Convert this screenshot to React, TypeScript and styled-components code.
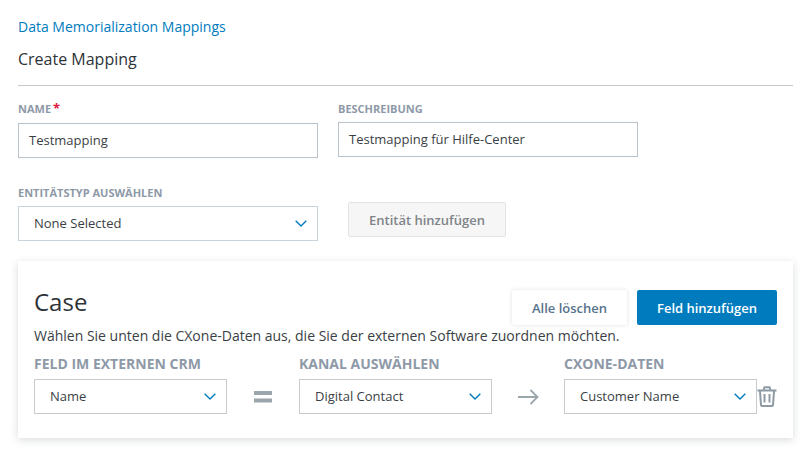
import React from "react";
import styled, { createGlobalStyle } from "styled-components";

const Global = createGlobalStyle`
  html, body { margin: 0; padding: 0; background: #fff; }
  body { font-family: "Open Sans", "Liberation Sans", sans-serif; color: #2e3338; }
`;

const Page = styled.div`
  width: 809px;
  height: 458px;
  box-sizing: border-box;
  padding: 17px 16px 0 18px;
  overflow: hidden;
`;
const Crumb = styled.a`
  display: block;
  font-size: 14px;
  line-height: 19px;
  color: #007cbe;
`;
const Title = styled.h1`
  margin: 12px 0 0;
  font-size: 16px;
  font-weight: 500;
  line-height: 22px;
  color: #2e3338;
`;
const Rule = styled.hr`
  margin: 15px 0 0;
  border: 0;
  height: 1px;
  background: #c3c8cc;
`;
const FormRow = styled.div<{ $top: number }>`
  display: flex;
  align-items: flex-start;
  gap: 20px;
  margin-top: ${(p) => p.$top}px;
`;
const Field = styled.div`
  width: 300px;
  display: flex;
  flex-direction: column;
`;
const SmallLabel = styled.label<{ $gap: number }>`
  font-size: 11px;
  font-weight: 700;
  line-height: 15px;
  color: #8e99a8;
  margin-bottom: ${(p) => p.$gap}px;
`;
const Star = styled.span`
  color: #e0173d;
  font-size: 13px;
  margin-left: 2px;
`;
const TextBox = styled.div`
  box-sizing: border-box;
  height: 35px;
  border: 1px solid #b6c4d0;
  padding: 0 10px 1px;
  display: flex;
  align-items: center;
  font-size: 13px;
  color: #3a3f45;
`;
const SelectBox = styled.div<{ $width: number; $pad: number; $border: string }>`
  box-sizing: border-box;
  width: ${(p) => p.$width}px;
  height: 35px;
  border: 1px solid ${(p) => p.$border};
  padding: 0 10px 1px ${(p) => p.$pad}px;
  display: flex;
  align-items: center;
  justify-content: space-between;
  font-size: 13px;
  color: #3a3f45;
  background: #fff;
`;
const GhostButton = styled.button`
  box-sizing: border-box;
  width: 158px;
  height: 35px;
  margin: 17px 0 0 10px;
  background: #f6f6f6;
  border: 1px solid #e2e5e8;
  border-radius: 2px;
  font: 600 13px "Open Sans", sans-serif;
  color: #7f8489;
`;
const Card = styled.section`
  box-sizing: border-box;
  height: 177px;
  margin-top: 20px;
  padding: 29px 16px 0;
  background: #fff;
  box-shadow: 0 2px 8px rgba(60, 75, 95, 0.2);
`;
const CardHead = styled.div`
  display: flex;
  align-items: flex-start;
  justify-content: space-between;
  height: 35px;
`;
const CardTitle = styled.h2`
  margin: -2px 0 0;
  font-size: 24px;
  font-weight: 400;
  line-height: 28px;
  color: #2e3338;
`;
const Actions = styled.div`
  display: flex;
  gap: 10px;
`;
const ClearButton = styled.button`
  width: 115px;
  height: 35px;
  border: 0;
  border-radius: 2px;
  background: #fff;
  box-shadow: 0 0 4px rgba(60, 75, 95, 0.16);
  font: 600 13px "Open Sans", sans-serif;
  color: #56738c;
`;
const PrimaryButton = styled.button`
  width: 140px;
  height: 35px;
  border: 0;
  border-radius: 2px;
  background: #007cbe;
  font: 600 13px "Open Sans", sans-serif;
  color: #fff;
`;
const Hint = styled.p`
  margin: 2px 0 0;
  font-size: 14px;
  line-height: 18px;
  color: #3a3f45;
`;
const MapRow = styled.div`
  display: grid;
  grid-template-columns: 193px 72px 193px 72px 193px 20px;
  margin-top: 9px;
`;
const ColLabel = styled.div`
  font-size: 14px;
  font-weight: 700;
  line-height: 19px;
  margin-bottom: 6px;
  color: #8e99a8;
  white-space: nowrap;
`;
const Joiner = styled.div`
  display: flex;
  align-items: center;
  justify-content: center;
`;
const TrashCell = styled.div`
  display: flex;
  align-items: center;
  justify-content: flex-end;
`;

const Chevron = () => (
  <svg width="12" height="7" viewBox="0 0 12 7" fill="none">
    <path d="M0.7 0.7 L6 6 L11.3 0.7" stroke="#007cbe" strokeWidth="1.4" />
  </svg>
);
const EqualIcon = () => (
  <svg width="18" height="12" viewBox="0 0 18 12">
    <rect x="0" y="0" width="18" height="4" fill="#9aa5ac" />
    <rect x="0" y="7.5" width="18" height="4" fill="#9aa5ac" />
  </svg>
);
const ArrowIcon = () => (
  <svg width="21" height="16" viewBox="0 0 21 16" fill="none">
    <path d="M0 8 H19.5 M12.5 1 L19.5 8 L12.5 15" stroke="#9aa5ac" strokeWidth="1.8" />
  </svg>
);
const TrashIcon = () => (
  <svg width="20" height="21" viewBox="0 0 20 21" fill="none" stroke="#8d9aa3" strokeWidth="2">
    <path d="M0.5 4.5 H19.5" />
    <path d="M6.5 4 L7.5 1.2 H12.5 L13.5 4" />
    <path d="M3 5 L4 19 Q4.1 20 5 20 H15 Q15.9 20 16 19 L17 5" />
    <path d="M7.5 8 V16.5 M12.5 8 V16.5" />
  </svg>
);

const Select = ({ value, width, pad, border }: { value: string; width: number; pad: number; border: string }) => (
  <SelectBox $width={width} $pad={pad} $border={border}>
    <span>{value}</span>
    <Chevron />
  </SelectBox>
);

export default function App() {
  return (
    <Page>
      <Global />
      <Crumb>Data Memorialization Mappings</Crumb>
      <Title>Create Mapping</Title>
      <Rule />
      <FormRow $top={15}>
        <Field>
          <SmallLabel $gap={7}>
            NAME<Star>*</Star>
          </SmallLabel>
          <TextBox>Testmapping</TextBox>
        </Field>
        <Field>
          <SmallLabel $gap={6}>BESCHREIBUNG</SmallLabel>
          <TextBox>Testmapping für Hilfe-Center</TextBox>
        </Field>
      </FormRow>
      <FormRow $top={27}>
        <Field>
          <SmallLabel $gap={6}>ENTITÄTSTYP AUSWÄHLEN</SmallLabel>
          <Select value="None Selected" width={300} pad={15} border="#c9d3da" />
        </Field>
        <GhostButton>Entität hinzufügen</GhostButton>
      </FormRow>
      <Card>
        <CardHead>
          <CardTitle>Case</CardTitle>
          <Actions>
            <ClearButton>Alle löschen</ClearButton>
            <PrimaryButton>Feld hinzufügen</PrimaryButton>
          </Actions>
        </CardHead>
        <Hint>Wählen Sie unten die CXone-Daten aus, die Sie der externen Software zuordnen möchten.</Hint>
        <MapRow>
          <ColLabel>FELD IM EXTERNEN CRM</ColLabel>
          <span />
          <ColLabel>KANAL AUSWÄHLEN</ColLabel>
          <span />
          <ColLabel>CXONE-DATEN</ColLabel>
          <span />
          <Select value="Name" width={193} pad={15} border="#c8cbcd" />
          <Joiner>
            <EqualIcon />
          </Joiner>
          <Select value="Digital Contact" width={193} pad={15} border="#c8cbcd" />
          <Joiner>
            <ArrowIcon />
          </Joiner>
          <Select value="Customer Name" width={193} pad={15} border="#c8cbcd" />
          <TrashCell>
            <TrashIcon />
          </TrashCell>
        </MapRow>
      </Card>
    </Page>
  );
}
